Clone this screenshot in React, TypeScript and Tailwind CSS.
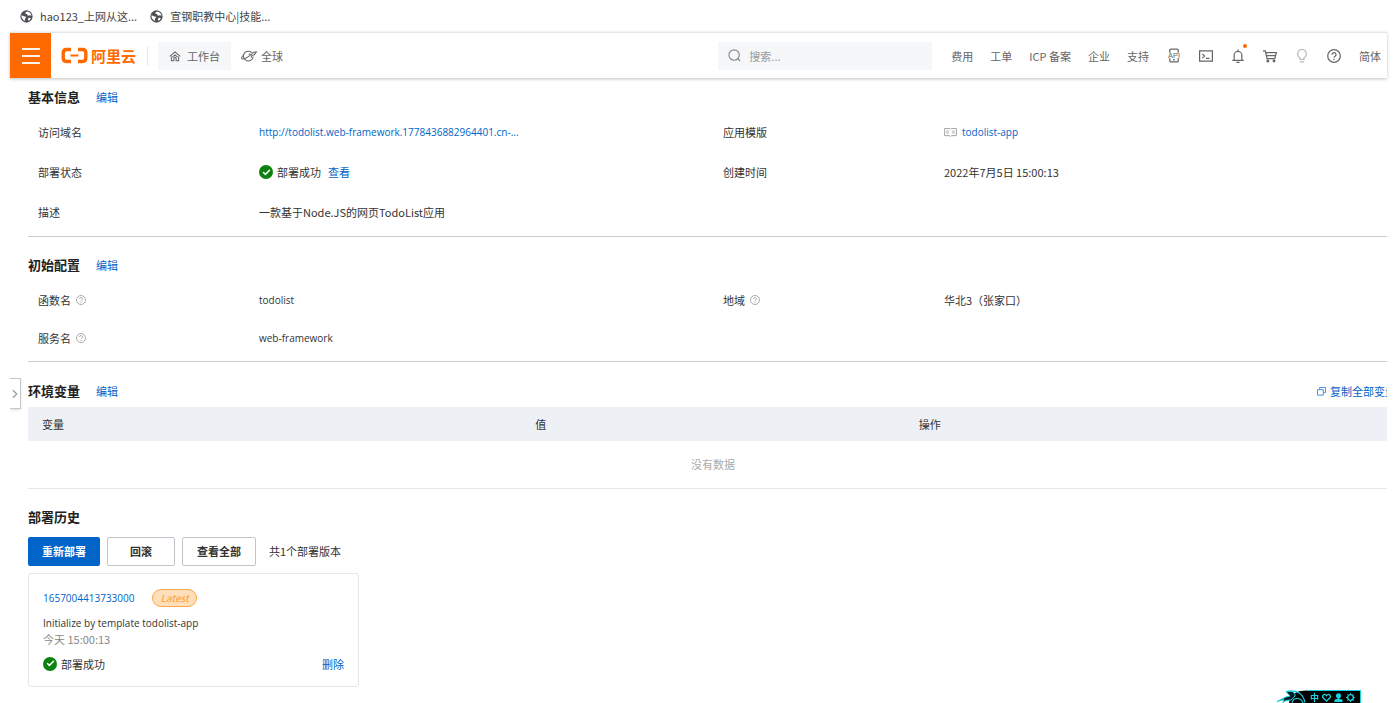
import { useState } from 'react';
import type { ReactNode } from 'react';
import { Check, ChevronRight } from 'lucide-react';

interface Version {
  id: string;
  message: string;
  time: string;
  status: string;
  latest: boolean;
}

const bookmarks = ['hao123_上网从这...', '宣钢职教中心|技能...'];

const navLinks = ['费用', '工单', 'ICP 备案', '企业', '支持'];

const envColumns = ['变量', '值', '操作'];

const versions: Version[] = [
  {
    id: '1657004413733000',
    message: 'Initialize by template todolist-app',
    time: '今天 15:00:13',
    status: '部署成功',
    latest: true,
  },
];

function GlobeIcon() {
  return (
    <svg viewBox="0 0 14 14" className="size-[13px]" aria-hidden="true">
      <circle cx="7" cy="7" r="6.6" fill="#4d5156" />
      <path
        d="M1.6 5.6c1.2.2 1.7.9 2.6 1.2 1 .3 2.2.1 2.4 1.1.1.8-1 .9-1.2 1.6-.2.7.3 1.3.2 2.2-2.4-.8-4-3-4-5.1zM7.6 1.7c-.8.7-2 .8-2 1.7 0 .8 1.3.5 1.9 1 .6.6.2 1.3 1 1.6.9.3 1.3-.4 2.2-.3.7.1 1 .6 1.6.7-.1-2.4-2-4.6-4.7-4.7zM9.3 8.5c.9-.3 2 0 2.4.5-.5 1.2-1.5 2.2-2.6 2.7-.5-1-.9-2.7.2-3.2z"
        fill="#fff"
      />
    </svg>
  );
}

function AliyunLogo() {
  return (
    <svg viewBox="0 0 27 17" className="h-[17px] w-[27px]" fill="none" stroke="#ff6a00" aria-hidden="true">
      <path
        d="M10 2.5H5.5Q2.2 2.5 2.2 6v5q0 3.5 3.3 3.5H10M17 2.5h4.5q3.3 0 3.3 3.5v5q0 3.5-3.3 3.5H17"
        strokeWidth="3.4"
      />
      <path d="M9.5 8.5h8" strokeWidth="2" />
    </svg>
  );
}

// Shared frame for the line icons of the top bar
function LineIcon({ children, className = 'size-[14px]' }: { children: ReactNode; className?: string }) {
  return (
    <svg
      viewBox="0 0 16 16"
      className={className}
      fill="none"
      stroke="currentColor"
      strokeWidth="1.4"
      aria-hidden="true"
    >
      {children}
    </svg>
  );
}

function ApiIcon() {
  return (
    <LineIcon className="h-[15px] w-4 shrink-0">
      <path d="M3.5 5V2.5q0-1.300 1.300-1.300h6.400q1.300 0 1.300 1.300V5M3.500 11v2.500q0 1.300 1.300 1.300h6.400q1.300 0 1.300-1.300V11M7 12.600h2" />
      <text
        x="8"
        y="10.500"
        textAnchor="middle"
        fontSize="8"
        fill="currentColor"
        stroke="none"
        fontFamily="Liberation Sans, sans-serif"
      >
        API
      </text>
    </LineIcon>
  );
}

const toolIcons: { label: string; icon: ReactNode; dim?: boolean; dot?: boolean }[] = [
  { label: 'OpenAPI', icon: <ApiIcon /> },
  {
    label: 'Cloud Shell',
    icon: (
      <LineIcon>
        <path d="M.7 2.2h14.6v11.6H.7zM3.8 5.5 6.3 8l-2.5 2.5M8 10.7h4" />
      </LineIcon>
    ),
  },
  {
    label: '消息',
    dot: true,
    icon: (
      <LineIcon>
        <path d="M1.5 13h13M3.6 13V7.2a4.4 4.4 0 0 1 8.8 0V13M8 .5v2.3M6.2 15.2h3.6" />
      </LineIcon>
    ),
  },
  {
    label: '购物车',
    icon: (
      <LineIcon>
        <path d="M0 2.2h2.6l2 8.8h8.9l1.7-6.8H3.2M4 7.5h10.3" />
        <circle cx="5.6" cy="13.8" r="1" fill="currentColor" />
        <circle cx="12.6" cy="13.8" r="1" fill="currentColor" />
      </LineIcon>
    ),
  },
  {
    label: '提示',
    dim: true,
    icon: (
      <LineIcon>
        <path d="M5.7 11.8V10A5 5 0 1 1 10.300 10v1.800zM5.500 14.800h5" />
      </LineIcon>
    ),
  },
  {
    label: '帮助',
    icon: (
      <LineIcon>
        <circle cx="8" cy="8" r="7.2" />
        <path d="M5.7 6.5a2.3 2.3 0 1 1 3.5 1.9C8.3 9 8 9.2 8 10M8 11.2v1.4" />
      </LineIcon>
    ),
  },
];

function HelpIcon() {
  return (
    <svg viewBox="0 0 16 16" className="size-[10px] text-[#999]" fill="none" stroke="currentColor" strokeWidth="1.3" aria-hidden="true">
      <circle cx="8" cy="8" r="7.2" />
      <path d="M5.7 6.4a2.3 2.3 0 1 1 3.4 2C8.2 8.9 8 9.2 8 10M8 11.2v1.4" />
    </svg>
  );
}

function SuccessMark() {
  return (
    <span className="flex size-[14px] items-center justify-center rounded-full bg-[#0b820f] text-white">
      <Check className="size-[9px]" strokeWidth={4} />
    </span>
  );
}

interface SectionProps {
  title: string;
  editable?: boolean;
  extra?: ReactNode;
  children: ReactNode;
}

function Section({ title, editable = true, extra, children }: SectionProps) {
  return (
    <section>
      <div className="flex h-5 items-center">
        <h2 className="text-[13px] font-bold text-[#222]">{title}</h2>
        {editable && (
          <a href="#edit" className="ml-4 text-[#0064c8]">
            编辑
          </a>
        )}
        {extra}
      </div>
      {children}
    </section>
  );
}

function Field({ label, help, tall, children }: { label: string; help?: boolean; tall?: boolean; children: ReactNode }) {
  return (
    <div className={tall ? 'flex h-10 items-center pl-[10px]' : 'flex h-[38px] items-center pl-[10px]'}>
      <dt className="flex w-[221px] shrink-0 items-center gap-[5px]">
        {label}
        {help && <HelpIcon />}
      </dt>
      <dd className="flex items-center">{children}</dd>
    </div>
  );
}

function TopBar() {
  const [keyword, setKeyword] = useState('');

  return (
    <header className="relative z-10 flex h-[46px] items-center border-t border-[#e4e6e8] bg-white text-[#666] shadow-[0_1px_3px_rgba(0,0,0,0.25)]">
      <button aria-label="菜单" className="flex h-full w-[41px] flex-col items-center justify-center gap-[5px] bg-[#ff6a00]">
        <span className="h-[2px] w-[18px] bg-[#fff3e8]" />
        <span className="h-[2px] w-[18px] bg-[#fff3e8]" />
        <span className="h-[2px] w-[18px] bg-[#fff3e8]" />
      </button>
      <a href="#home" className="ml-[10px] flex items-center gap-[3px] text-[15px] font-bold text-[#ff6a00]">
        <AliyunLogo />
        阿里云
      </a>
      <span className="ml-[11px] h-5 w-px bg-[#e8e8e8]" />
      <a href="#workbench" className="ml-[10px] flex h-7 items-center gap-[6px] bg-[#f5f7f8] px-[11px]">
        <LineIcon className="size-[12px]">
          <path d="M1 8.5 8 2.5l7 6M3.2 8.5v5.8h3.3v-3a1.5 1.5 0 0 1 3 0v3h3.3V8.5M4.5 9.5 8 6.5l3.5 3" />
        </LineIcon>
        工作台
      </a>
      <a href="#region" className="ml-[10px] flex items-center gap-1">
        <svg viewBox="0 0 18 16" className="h-[14px] w-4" fill="none" stroke="currentColor" strokeWidth="1.2" aria-hidden="true">
          <path d="M12 4A5.600 5.600 0 1 0 13.800 8.500M3.500 6.500C1.200 8.200 0 9.900.7 10.900c1.200 1.400 6.300-1 10.300-4.200M8.500 5.800l3 .5 2.500-2.500 3.500-.5-2.500 3.200-2.700 1-1 2.500" />
        </svg>
        全球
      </a>
      <label className="ml-auto flex h-7 w-[214px] items-center gap-2 bg-[#f5f7f8] px-[10px] text-[#888]">
        <LineIcon className="size-[13px]">
          <circle cx="7.5" cy="7.5" r="6.4" />
          <path d="m12 12 3 3" />
        </LineIcon>
        <input
          aria-label="搜索"
          value={keyword}
          onChange={(e) => setKeyword(e.target.value)}
          placeholder="搜索..."
          className="min-w-0 flex-1 bg-transparent outline-none placeholder:text-[#999]"
        />
      </label>
      <nav className="ml-[19px] flex items-center gap-[17px]">
        {navLinks.map((item) => (
          <a key={item} href="#nav">
            {item}
          </a>
        ))}
      </nav>
      <div className="ml-[18px] flex items-center gap-[18px] pr-[6px]">
        {toolIcons.map((tool) => (
          <button
            key={tool.label}
            aria-label={tool.label}
            className={tool.dim ? 'relative flex w-[14px] justify-center text-[#bbb]' : 'relative flex w-[14px] justify-center'}
          >
            {tool.icon}
            {tool.dot && <span className="absolute -top-[5px] -right-[2px] size-1 rounded-full bg-[#ff6a00]" />}
          </button>
        ))}
        <a href="#lang">简体</a>
      </div>
    </header>
  );
}

function VersionCard({ version }: { version: Version }) {
  return (
    <article className="mt-[7px] h-[114px] w-[331px] rounded-[3px] border border-[#e6e6e6] px-[14px] pt-[15px]">
      <div className="flex h-[18px] items-center gap-[18px]">
        <a href="#version" className="font-['Open_Sans',sans-serif] text-[10px] text-[#0064c8]">
          {version.id}
        </a>
        {version.latest && (
          <span className="flex h-[18px] items-center rounded-full border border-[#fba84b] bg-[#fedfb9] px-[7px] text-[10px] text-[#fa9a35] italic">
            Latest
          </span>
        )}
      </div>
      <p className="mt-2 font-['Open_Sans',sans-serif] text-[10px]">{version.message}</p>
      <p className="text-[#888]">{version.time}</p>
      <div className="mt-[9px] flex items-center gap-1">
        <SuccessMark />
        {version.status}
        <button className="ml-auto text-[#0064c8]">删除</button>
      </div>
    </article>
  );
}

// Floating input-method bar on the bottom edge
function ImeBar() {
  return (
    <div className="fixed right-[39px] bottom-0 flex h-[13px] items-center text-[#19d3df]">
      <svg viewBox="0 0 30 13" className="h-[13px] w-[30px]" aria-hidden="true">
        <path d="M12 13C13 5 18 .5 30 .5V13z" fill="#000" />
        <path d="M0 11.5 9 7l4-1-4-4.500c6-1 10 1 9 4.500l-4 4-5 .5-3 2 1-3z" fill="#031d24" stroke="#19d3df" />
        <path d="M10 1.5c8-2 16 1 18 11M15 13c1-6 9-6 11 0" fill="none" stroke="#19d3df" strokeWidth="1.2" />
      </svg>
      <div className="flex h-full items-center gap-[3px] border-t border-r border-[#19d3df] bg-black pr-[5px] pl-[3px]">
        <span className="text-[9px] leading-none font-bold">中</span>
        <svg viewBox="0 0 10 10" className="size-[9px]" fill="none" stroke="currentColor" strokeWidth="1.4" aria-hidden="true">
          <path d="M5 9 1 5C-.3 2.500 3 0 5 3c2-3 5.300-.5 4 2z" />
        </svg>
        <svg viewBox="0 0 10 10" className="size-[9px]" fill="currentColor" aria-hidden="true">
          <circle cx="5" cy="3" r="2.8" />
          <path d="M4 5h2v1.500l3.500 1V10h-9V7.500l3.500-1z" />
        </svg>
        <svg viewBox="0 0 10 10" className="size-[9px]" fill="none" stroke="currentColor" aria-hidden="true">
          <circle cx="5" cy="5" r="3.2" strokeWidth="1.6" />
          <path d="M5 0v1.500M5 8.500V10M0 5h1.500M8.500 5H10M1.500 1.500l1 1M7.500 7.500l1 1M8.500 1.500l-1 1M2.500 7.500l-1 1" />
        </svg>
      </div>
    </div>
  );
}

export default function App() {
  return (
    <div className="min-h-screen overflow-hidden bg-white pr-[13px] pl-[10px] font-['Noto_Sans_CJK_SC',sans-serif] text-[11px] leading-4 text-[#333]">
      <div className="flex h-8 items-center gap-[13px] pl-[10px] text-[#444]">
        {bookmarks.map((name) => (
          <a key={name} href="#bookmark" className="flex items-center gap-[7px]">
            <GlobeIcon />
            {name}
          </a>
        ))}
      </div>

      <TopBar />

      <main className="relative overflow-hidden pt-[9px] pb-4 pl-[18px]">
        <button
          aria-label="展开"
          className="absolute top-[300px] left-0 flex h-[31px] w-[11px] items-center justify-center border border-l-0 border-[#c8c8c8] bg-white text-[#999] shadow-sm"
        >
          <ChevronRight className="size-[14px] shrink-0" />
        </button>

        {/* The content is a little wider than the viewport and is cut at the right */}
        <div className="-mr-[11px]">
          <Section title="基本信息">
            <dl className="mt-[5px] grid grid-cols-2 border-b border-[#ccc] pb-1">
              <Field label="访问域名" tall>
                <a href="#domain" className="font-['Open_Sans',sans-serif] text-[10px] text-[#0064c8]">
                  http://todolist.web-framework.1778436882964401.cn-...
                </a>
              </Field>
              <Field label="应用模版" tall>
                <svg viewBox="0 0 14 10" className="mr-[5px] h-[9px] w-[13px]" fill="none" stroke="#999" aria-hidden="true">
                  <path d="M.5.500h5.500L7 1.500 8 .500h5.500v8H8L7 9.500 6 8.500H.500zM2.500 3.500h2.500M2.500 5.500h2.500M9 3.500h2.500M9 5.500h2.500" />
                </svg>
                <a href="#template" className="font-['Open_Sans',sans-serif] text-[10px] text-[#0064c8]">
                  todolist-app
                </a>
              </Field>
              <Field label="部署状态" tall>
                <SuccessMark />
                <span className="ml-1">部署成功</span>
                <a href="#status" className="ml-[7px] text-[#0064c8]">
                  查看
                </a>
              </Field>
              <Field label="创建时间" tall>
                2022年7月5日 15:00:13
              </Field>
              <Field label="描述" tall>
                一款基于Node.JS的网页TodoList应用
              </Field>
            </dl>
          </Section>

          <div className="mt-[18px]">
            <Section title="初始配置">
              <dl className="mt-[6px] grid grid-cols-2 border-b border-[#ccc] pb-1">
                <Field label="函数名" help>
                  <span className="font-['Open_Sans',sans-serif] text-[10px]">todolist</span>
                </Field>
                <Field label="地域" help>
                  华北3（张家口）
                </Field>
                <Field label="服务名" help>
                  <span className="font-['Open_Sans',sans-serif] text-[10px]">web-framework</span>
                </Field>
              </dl>
            </Section>
          </div>

          <div className="mt-[19px]">
            <Section
              title="环境变量"
              extra={
                <button className="mr-[2px] ml-auto flex items-center gap-1 text-[#0064c8]">
                  <svg viewBox="0 0 10 10" className="size-[9px]" fill="none" stroke="currentColor" strokeWidth="0.8" aria-hidden="true">
                    <path d="M3 2.500v-2h6.500v5.500h-2M.5 3h6.500v6H.5z" />
                  </svg>
                  复制全部变量
                </button>
              }
            >
              <table className="mt-[6px] w-full table-fixed text-left">
                <thead>
                  <tr className="h-[34px] bg-[#edf1f6]">
                    {envColumns.map((col) => (
                      <th key={col} className="px-[14px] font-normal first:w-[36%] last:w-[36%]">
                        {col}
                      </th>
                    ))}
                  </tr>
                </thead>
                <tbody>
                  <tr className="h-[47px] border-b border-[#e8e8e8]">
                    <td colSpan={3} className="text-center text-[#aaa]">
                      没有数据
                    </td>
                  </tr>
                </tbody>
              </table>
            </Section>
          </div>

          <div className="mt-[18px]">
            <Section title="部署历史" editable={false}>
              <div className="mt-[10px] flex items-center gap-[7px]">
                <button className="h-[29px] rounded-[2px] bg-[#0064c8] px-[14px] font-bold text-white">重新部署</button>
                <button className="h-[29px] rounded-[2px] border border-[#c0c6cc] px-[22px] font-bold">回滚</button>
                <button className="h-[29px] rounded-[2px] border border-[#c0c6cc] px-[14px] font-bold">查看全部</button>
                <span className="ml-[6px]">共{versions.length}个部署版本</span>
              </div>
              {versions.map((version) => (
                <VersionCard key={version.id} version={version} />
              ))}
            </Section>
          </div>
        </div>
      </main>

      <ImeBar />
    </div>
  );
}
